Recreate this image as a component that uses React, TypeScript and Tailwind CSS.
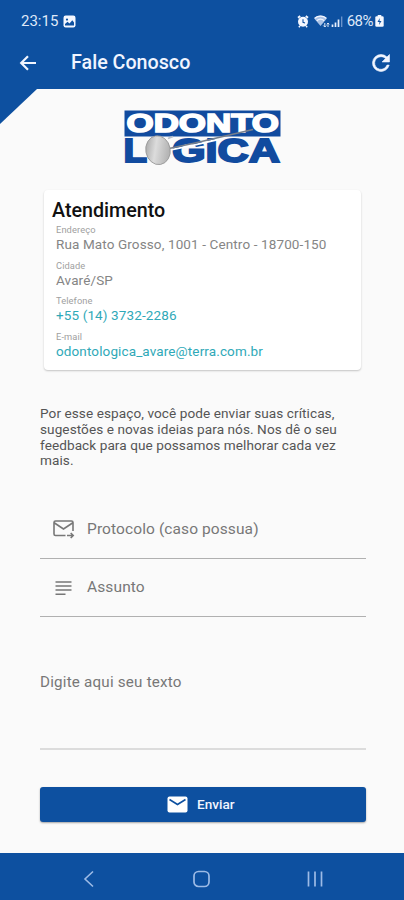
import React from "react";

function StatusBar() {
  return (
    <div className="flex h-[42px] items-center pr-[20px] pl-[21px] text-[15px] text-[#dfe8f8]">
      <span>23:15</span>
      <svg className="ml-[5px]" width="13" height="13" viewBox="0 0 13 13">
        <rect x="0.5" y="0.5" width="12" height="12" rx="2.2" fill="#f4f7ff" />
        <circle cx="4" cy="4.6" r="1.1" fill="#0d50a0" />
        <path d="M2 10.5V9l2.5-2.2 2 1.6L9.300 5.300 11 7.500v3z" fill="#0d50a0" />
      </svg>
      <div className="ml-auto flex items-center">
        <svg className="-ml-[2px]" width="12" height="13" viewBox="0 0 12 13">
          <path d="M1 2.800 3.200 1M11 2.800 8.800 1" stroke="#f4f7ff" strokeWidth="1.800" />
          <circle cx="6" cy="6.800" r="5" fill="#f4f7ff" />
          <path d="M1.800 12.300 3 11M10.200 12.300 9 11" stroke="#f4f7ff" strokeWidth="1.500" />
          <path d="M6 4.300v3l2 .8" stroke="#0d50a0" strokeWidth="1.100" fill="none" />
        </svg>
        <svg className="ml-[5px]" width="16" height="14" viewBox="0 0 16 14">
          <path d="M0 4.200C3.700.500 9.300.500 13 4.200L6.500 12z" fill="#aac2e6" />
          <path d="M.800 4.300c3.300-3 8.100-3 11.400 0M2.800 6.800c2.200-2 5.200-2 7.400 0" fill="none" stroke="#f0f5ff" strokeWidth="1.300" />
          <path d="M10.800 9v4M9.300 11.500l1.500 1.500 1.500-1.500M14 13V9M12.700 10.300 14 9l1.300 1.300" fill="none" stroke="#dfe8f8" />
        </svg>
        <svg className="ml-[1px]" width="12" height="13" viewBox="0 0 12 13">
          <path d="M1.500 12V9.500M4.500 12V7.500M7.500 12V4.500" stroke="#e6eefb" strokeWidth="1.700" />
          <path d="M10.700 12V1.500" stroke="#7197cd" strokeWidth="1.300" />
        </svg>
        <span className="ml-[4px] tracking-[-0.500px]">68%</span>
        <svg className="ml-[2px]" width="9" height="12" viewBox="0 0 9 12">
          <rect x="2.700" y="0" width="3.600" height="2" fill="#f4f7ff" />
          <rect x="0.300" y="1.300" width="8.400" height="10.500" rx="1.300" fill="#f4f7ff" />
          <path d="M4.800 3 2.500 7h2L4 10l2.500-4h-2z" fill="#0d50a0" />
        </svg>
      </div>
    </div>
  );
}

function AppBar() {
  return (
    <div className="flex h-[46px] items-center pr-[14px] pb-[5px] pl-[18px] text-[#f1f5ff]">
      <svg width="20" height="20" viewBox="0 0 20 20" fill="none" stroke="currentColor" strokeWidth="2.200">
        <path d="M18 10H3.500M10 3.200 3.200 10l6.800 6.800" />
      </svg>
      <h1 className="ml-[33px] text-[19.700px] leading-none font-medium">Fale Conosco</h1>
      <svg className="ml-auto" width="18" height="18" viewBox="3.500 3.500 17 17" fill="currentColor" stroke="currentColor" strokeWidth="0.600">
        <path d="M17.650 6.350A7.958 7.958 0 0 0 12 4a8 8 0 1 0 7.730 10h-2.080A6 6 0 1 1 12 6c1.660 0 3.140.690 4.220 1.780L13 11h7V4z" />
      </svg>
    </div>
  );
}

function Logo() {
  return (
    <svg className="-mt-[2px] ml-[115px] block" width="176" height="68" viewBox="-8 -2 176 68">
      <defs>
        <linearGradient id="disc" x1="0" y1="0" x2="1" y2="0.400">
          <stop offset="0" stopColor="#9d9d9d" />
          <stop offset="0.500" stopColor="#dcdcdc" />
          <stop offset="1" stopColor="#b5b5b5" />
        </linearGradient>
      </defs>
      <rect x="1.500" y="0.500" width="156" height="26" fill="#114b9f" />
      <g fontFamily="'Liberation Sans', Arial, sans-serif" fontWeight="bold">
        <text x="3.500" y="22.300" fontSize="26" fill="#fff" stroke="#fff" strokeWidth="1.600" textLength="152.500" lengthAdjust="spacingAndGlyphs">ODONTO</text>
        <text x="0.500" y="52.400" fontSize="33" fill="#114b9f" stroke="#114b9f" strokeWidth="1.900" textLength="23.500" lengthAdjust="spacingAndGlyphs">L</text>
        <text x="49" y="52.400" fontSize="33" fill="#114b9f" stroke="#114b9f" strokeWidth="1.900" textLength="108" lengthAdjust="spacingAndGlyphs">GICA</text>
      </g>
      <path d="M45 28.500 50 26.500" stroke="#b9bec6" strokeWidth="1.800" />
      <path d="M49 39.600 72 34.800 95 29.500" fill="none" stroke="#fff" strokeWidth="1.800" />
      <path d="M46 38.500 72 33 130 19.500" fill="none" stroke="#777f8b" strokeWidth="1.600" />
      <ellipse cx="35" cy="40.200" rx="12.200" ry="14.500" fill="url(#disc)" stroke="#949494" strokeWidth="0.800" transform="rotate(-10 35 40.200)" />
    </svg>
  );
}

type Row = { label: string; value: string; style: string };

const rows: Row[] = [
  { label: "Endereço", value: "Rua Mato Grosso, 1001 - Centro - 18700-150", style: "text-[#858585]" },
  { label: "Cidade", value: "Avaré/SP", style: "text-[#858585]" },
  { label: "Telefone", value: "+55 (14) 3732-2286", style: "text-[#2fa9b8]" },
  { label: "E-mail", value: "odontologica_avare@terra.com.br", style: "text-[#2fa9b8]" },
];

function ContactCard() {
  return (
    <section className="mt-[14px] mr-[43px] ml-[44px] h-[180px] rounded-[4px] bg-white pt-[10px] pl-[8px] shadow-[0_1px_2px_rgba(0,0,0,0.220)]">
      <h2 className="text-[19.700px] leading-[22px] font-medium text-[#111]">Atendimento</h2>
      <dl className="ml-[4px]">
        {rows.map((r) => (
          <div key={r.label} className="h-[35.500px] pt-[2px]">
            <dt className="text-[9.300px] leading-[11px] tracking-[0.100px] text-[#a0a0a0]">{r.label}</dt>
            <dd className={`text-[13.500px] leading-[18px] tracking-[0.120px] whitespace-nowrap ${r.style}`}>{r.value}</dd>
          </div>
        ))}
      </dl>
    </section>
  );
}

function NavBar() {
  return (
    <nav className="flex h-[47px] items-center bg-[#0d50a0] pt-[4px] text-[#9dbbe6]">
      <svg className="ml-[82px]" width="13" height="18" viewBox="0 0 13 18" fill="none" stroke="currentColor" strokeWidth="1.600">
        <path d="M11 1.500 3 9l8 7.500" />
      </svg>
      <svg className="ml-[97px]" width="19" height="18" viewBox="0 0 19 18" fill="none" stroke="currentColor" strokeWidth="1.700">
        <rect x="2" y="1.500" width="15" height="15" rx="4.500" />
      </svg>
      <svg className="ml-[96px]" width="16" height="18" viewBox="0 0 16 18" stroke="currentColor" strokeWidth="1.700">
        <path d="M1.500 1.500v15M8 1.500v15M14.500 1.500v15" />
      </svg>
    </nav>
  );
}

export default function App() {
  return (
    <div className="flex h-[900px] w-[404px] flex-col overflow-hidden bg-[#fafafa] font-[Roboto,sans-serif]">
      <header className="h-[88.500px] shrink-0 bg-[#0d50a0]">
        <StatusBar />
        <AppBar />
      </header>
      <main className="relative flex-1 pt-[21.500px]">
        <svg className="absolute top-0 left-0" width="37" height="36" viewBox="0 0 37 36">
          <path d="M0 0h37L0 35z" fill="#0d50a0" />
        </svg>
        <Logo />
        <ContactCard />
        <p className="mt-[36px] ml-[40px] text-[13.600px] leading-[15.800px] tracking-[0.070px] whitespace-nowrap text-[#555]">
          Por esse espaço, você pode enviar suas críticas,
          <br />
          sugestões e novas ideias para nós. Nos dê o seu
          <br />
          feedback para que possamos melhorar cada vez
          <br />
          mais.
        </p>
        <form className="mt-[31px] mr-[38px] ml-[40px] text-[#777]">
          <div className="flex h-[59px] items-center border-b border-[#b0b0b0] pl-[13px]">
            <svg width="22" height="20" viewBox="0 0 22 20" fill="none" stroke="currentColor" strokeWidth="1.600">
              <path d="M12.500 16.500H2.500a1.500 1.500 0 0 1-1.500-1.500V3.500A1.500 1.500 0 0 1 2.500 2h16A1.500 1.500 0 0 1 20 3.500V12M1.500 4l9 6 9-6" />
              <path d="M14 16.500h6M17.700 14l2.500 2.500-2.500 2.500" />
            </svg>
            <span className="ml-[12px] text-[15.500px] tracking-[0.100px]">Protocolo (caso possua)</span>
          </div>
          <div className="flex h-[58px] items-center border-b border-[#b0b0b0] pl-[15px]">
            <svg width="17" height="16" viewBox="0 0 17 16" stroke="currentColor" strokeWidth="1.600">
              <path d="M.500 2h16M.500 6h16M.500 10h16M.500 14.200h10" />
            </svg>
            <span className="ml-[15px] text-[15.500px] tracking-[0.120px]">Assunto</span>
          </div>
          <div className="mt-[48px] h-[85px] border-b-2 border-[#dcdcdc] pt-[9px] text-[15.200px] leading-[17px] tracking-[0.200px]">
            Digite aqui seu texto
          </div>
          <button
            type="button"
            className="mt-[37px] flex h-[35px] w-full items-center rounded-[3px] bg-[#0d50a0] pl-[127px] text-[13.600px] font-medium text-[#f1f5ff] shadow-[0_1px_2px_rgba(0,0,0,0.350)]"
          >
            <svg width="21" height="17" viewBox="0 0 21 17">
              <rect x="0.500" y="0.500" width="20" height="16" rx="2" fill="#fff" />
              <path d="m2.500 3.500 8 5 8-5" fill="none" stroke="#0d50a0" strokeWidth="1.600" />
            </svg>
            <span className="ml-[9px]">Enviar</span>
          </button>
        </form>
      </main>
      <NavBar />
    </div>
  );
}
